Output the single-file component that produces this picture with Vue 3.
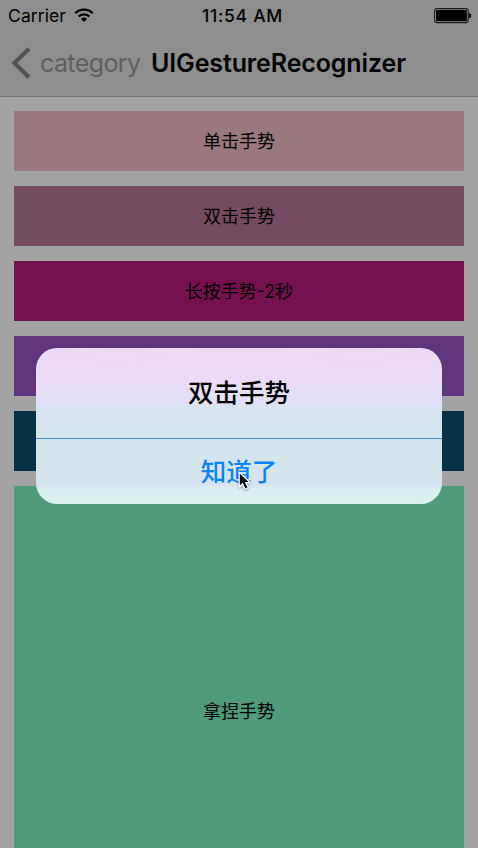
<script setup>
const gestures = [
  { label: '单击手势', kind: 'tap' },
  { label: '双击手势', kind: 'double-tap' },
  { label: '长按手势-2秒', kind: 'press' },
  { label: '', kind: 'swipe' },
  { label: '', kind: 'pan' },
  { label: '拿捏手势', kind: 'pinch' },
]
</script>

<template>
  <div class="screen">
    <header class="header">
      <div class="status">
        <div class="carrier">
          <span class="carrier-name">Carrier</span>
          <svg class="wifi" width="20" height="15" viewBox="0 0 20 15">
            <g fill="none" stroke="#000" stroke-width="2.2">
              <path d="M1.3 5.3 A12.3 12.3 0 0 1 18.7 5.3" />
              <path d="M4.6 8.6 A7.6 7.6 0 0 1 15.4 8.6" />
            </g>
            <path d="M10 14 L7 11 A4.3 4.3 0 0 1 13 11 Z" fill="#000" />
          </svg>
        </div>
        <span class="time">11:54 AM</span>
        <svg class="battery" width="38" height="16" viewBox="0 0 38 16">
          <rect x="0.6" y="0.6" width="33.6" height="14" rx="2.4" fill="none" stroke="#1c1c1c" stroke-width="1.1" />
          <rect x="2" y="2" width="30.8" height="11.2" rx="1" fill="#000" />
          <path d="M35.2 5.2 C37.3 5.5 37.3 9.7 35.2 10 Z" fill="#000" stroke="#000" stroke-width=".6" />
        </svg>
      </div>
      <nav class="nav">
        <svg class="chevron" width="20" height="32" viewBox="0 0 20 32">
          <path d="M18 1.8 L3.4 16 L18 30.2" fill="none" stroke="#535353" stroke-width="4.2" />
        </svg>
        <span class="back">category</span>
        <h1 class="title">UIGestureRecognizer</h1>
      </nav>
    </header>
    <main class="list">
      <div v-for="g in gestures" :key="g.kind" class="block" :class="g.kind">{{ g.label }}</div>
    </main>

    <section class="alert">
      <div class="message">双击手势</div>
      <div class="action">知道了</div>
    </section>
    <svg class="cursor" width="16" height="22" viewBox="0 0 16 22">
      <path d="M1.2 1.2 V15.8 L4.6 12.7 L7 18.2 L10.2 16.8 L7.8 11.6 H12.2 Z" fill="#0a0a0a" stroke="#fff" stroke-width="1.2" />
    </svg>
  </div>
</template>

<style>
body {
  background: #a3a3a3;
}
</style>

<style scoped>
.screen {
  position: relative;
  width: 478px;
  height: 848px;
  overflow: hidden;
  display: flex;
  flex-direction: column;
  background: #a3a3a3;
  color: #000;
  font-family: Inter, "Noto Sans CJK SC", sans-serif;
}
.header {
  box-sizing: border-box;
  height: 97px;
  flex: none;
  background: #8e8e8e;
  border-bottom: 1px solid #777;
}
.status {
  display: grid;
  grid-template-columns: 1fr auto 1fr;
  align-items: center;
  height: 31px;
  padding: 0 6px 0 8px;
  font-size: 17px;
  line-height: 31px;
}
.carrier {
  display: flex;
  align-items: center;
  gap: 8px;
}
.carrier-name,
.time {
  padding-top: 1px;
  line-height: 30px;
}
.carrier-name {
  font-size: 17.5px;
  letter-spacing: 0.1px;
}
.time {
  padding-left: 5px;
  font-size: 17.5px;
  font-weight: 500;
  letter-spacing: 0.75px;
}
.battery {
  justify-self: end;
}
.nav {
  display: flex;
  align-items: center;
  height: 64px;
  padding-left: 11px;
}
.back {
  margin-left: 9px;
  width: 111px;
  font-size: 25px;
  letter-spacing: -0.6px;
  color: #5f5f5f;
}
.title {
  margin: 0;
  font-size: 25px;
  font-weight: 600;
  letter-spacing: -0.12px;
  white-space: nowrap;
}
.list {
  flex: 1;
  min-height: 0;
  display: flex;
  flex-direction: column;
  gap: 15px;
  padding: 14px 14px 0;
}
.block {
  box-sizing: border-box;
  height: 60px;
  flex: none;
  display: flex;
  align-items: center;
  justify-content: center;
  padding-bottom: 2px;
  font-size: 18px;
}
.tap { background: #99797d; }
.double-tap { background: #754c5f; }
.press { background: #76114f; }
.swipe { background: #603580; }
.pan { background: #083148; }
.pinch { height: 450px; background: #529b7a; }
.alert {
  position: absolute;
  left: 36.3px;
  top: 348px;
  width: 405.4px;
  height: 156px;
  border-radius: 21px;
  overflow: hidden;
  background:
    radial-gradient(ellipse 190px 20px at 50% 0, #f0d8f5 0, rgba(240, 216, 245, 0) 100%),
    linear-gradient(#ebdaf7 0, #eadbf7 36px, #e4dff7 42px, #e2e0f6 56px, #d8e4f1 59px, #d7e4f0 74px, #d3e6ec 84px, #d3e5eb 124px, #d7e3ef 136px, #d8e6f0 138px, #daf0ef 141px, #daf1ef 156px);
}
.message,
.action {
  box-sizing: border-box;
  display: flex;
  align-items: center;
  justify-content: center;
  padding-bottom: 4px;
  font-size: 25.5px;
  font-weight: 500;
}
.message {
  height: 90px;
  padding-bottom: 5px;
}
.action {
  height: 66px;
  border-top: 1px solid #4491c8;
  color: #0a84ff;
}
.cursor {
  position: absolute;
  left: 238px;
  top: 471px;
  filter: drop-shadow(0 1px 1px rgba(0, 0, 0, 0.35));
}
</style>
